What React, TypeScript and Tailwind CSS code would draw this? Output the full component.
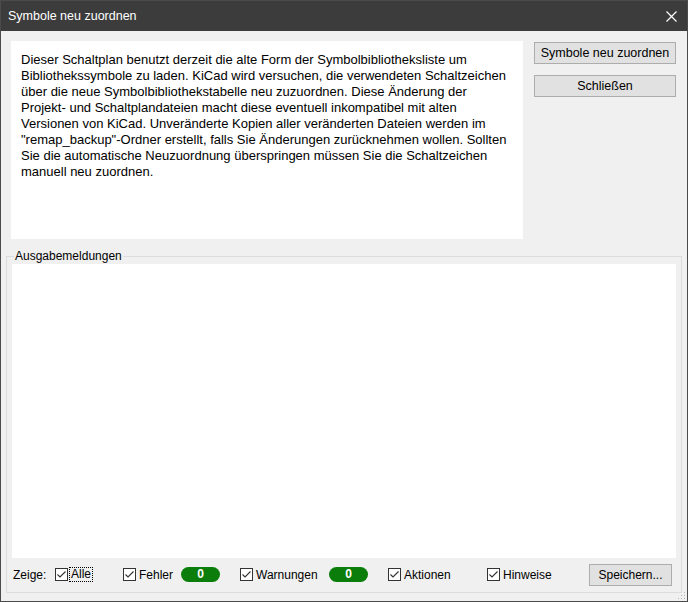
import React from "react";

function Check() {
  return (
    <svg width="13" height="13" viewBox="0 0 13 13" className="shrink-0">
      <rect x="0.5" y="0.5" width="12" height="12" fill="#fff" stroke="#333" />
      <polyline points="2.5,6.5 5,9 10.5,3.5" fill="none" stroke="#333" strokeWidth="1.1" />
    </svg>
  );
}

function Badge() {
  return (
    <div className="w-[39px] h-[15px] rounded-full bg-[#0b7d0b] text-white font-bold text-[12px] leading-[15px] flex items-center justify-center">
      0
    </div>
  );
}

export default function App() {
  return (
    <div className="w-[688px] h-[602px] flex flex-col bg-[#f0f0f0] border border-[#4b4b4b] font-['Liberation_Sans',Arial,sans-serif] text-[12px] text-black overflow-hidden">
      <div className="h-[30px] shrink-0 bg-[#3c3c3c] flex items-center justify-between pl-[7px] pr-[10px] text-white text-[12.5px]">
        <span>Symbole neu zuordnen</span>
        <svg width="11" height="11" viewBox="0 0 11 11">
          <path d="M0.5 0.5 L10.5 10.5 M10.5 0.5 L0.5 10.5" stroke="#fff" strokeWidth="1.2" />
        </svg>
      </div>
      <div className="flex-1 flex flex-col relative">
        <div className="mt-[10px] ml-[10px] flex gap-[11px]">
          <div className="w-[512px] h-[198px] bg-white pl-[10px] pt-[11px] leading-[16px] text-[13px]">
            Dieser Schaltplan benutzt derzeit die alte Form der Symbolbibliotheksliste um
            <br />
            Bibliothekssymbole zu laden. KiCad wird versuchen, die verwendeten Schaltzeichen
            <br />
            über die neue Symbolbibliothekstabelle neu zuzuordnen. Diese Änderung der
            <br />
            Projekt- und Schaltplandateien macht diese eventuell inkompatibel mit alten
            <br />
            Versionen von KiCad. Unveränderte Kopien aller veränderten Dateien werden im
            <br />
            "remap_backup"-Ordner erstellt, falls Sie Änderungen zurücknehmen wollen. Sollten
            <br />
            Sie die automatische Neuzuordnung überspringen müssen Sie die Schaltzeichen
            <br />
            manuell neu zuordnen.
          </div>
          <div className="flex flex-col gap-[11px] mt-[1px] text-[12.5px]">
            <div className="w-[142px] h-[22px] bg-[#e1e1e1] border border-[#adadad] flex items-center justify-center">
              Symbole neu zuordnen
            </div>
            <div className="w-[142px] h-[22px] bg-[#e1e1e1] border border-[#adadad] flex items-center justify-center">
              Schließen
            </div>
          </div>
        </div>
        <div className="relative mt-[17px] ml-[5px] w-[676px] h-[337px] border border-[#dcdcdc] pt-[7px] px-[5px]">
          <span className="absolute -top-[8px] left-[7px] bg-[#f0f0f0] px-[1px] leading-[14px]">
            Ausgabemeldungen
          </span>
          <div className="h-[294px] bg-white" />
          <div className="h-[33px] flex items-center pl-[1px]">
            <span className="w-[42px]">Zeige:</span>
            <div className="w-[68px] flex items-center">
              <Check />
              <span className="ml-[1px] px-[1px] border border-dotted border-black leading-[13px]">Alle</span>
            </div>
            <div className="w-[58px] flex items-center">
              <Check />
              <span className="ml-[3px]">Fehler</span>
            </div>
            <Badge />
            <div className="w-[20px]" />
            <div className="w-[89px] flex items-center">
              <Check />
              <span className="ml-[3px]">Warnungen</span>
            </div>
            <Badge />
            <div className="w-[20px]" />
            <div className="w-[99px] flex items-center">
              <Check />
              <span className="ml-[3px]">Aktionen</span>
            </div>
            <div className="w-[102px] flex items-center">
              <Check />
              <span className="ml-[3px]">Hinweise</span>
            </div>
            <div className="w-[83px] h-[22px] bg-[#e1e1e1] border border-[#adadad] flex items-center justify-center">
              Speichern...
            </div>
          </div>
        </div>
        <svg className="absolute right-[1px] bottom-[1px]" width="8" height="8" viewBox="0 0 8 8">
          <rect x="6" y="0" width="1" height="1" fill="#b5b5b5" />
          <rect x="3" y="3" width="1" height="1" fill="#b5b5b5" />
          <rect x="6" y="3" width="1" height="1" fill="#b5b5b5" />
          <rect x="0" y="6" width="1" height="1" fill="#b5b5b5" />
          <rect x="3" y="6" width="1" height="1" fill="#b5b5b5" />
          <rect x="6" y="6" width="1" height="1" fill="#b5b5b5" />
        </svg>
      </div>
    </div>
  );
}
